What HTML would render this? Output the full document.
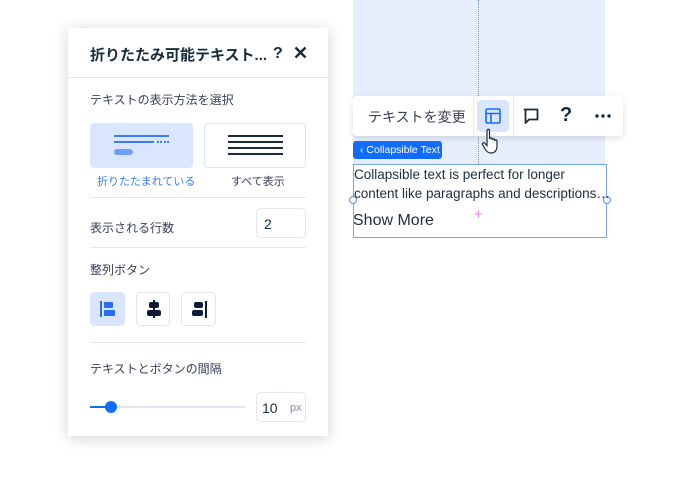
<!DOCTYPE html>
<html><head><meta charset="utf-8"><style>
*{margin:0;padding:0;box-sizing:border-box}
body{width:700px;height:480px;background:#fff;position:relative;overflow:hidden;font-family:"Liberation Sans","Noto Sans CJK JP",sans-serif;color:#20303c}
.abs{position:absolute}
.panel{left:68px;top:28px;width:260px;height:408px;background:#fff;box-shadow:0 2px 14px rgba(0,0,0,.18)}
.hr{position:absolute;left:22px;width:216px;height:1px;background:#e3e6ec}
.lbl{position:absolute;font-size:12px;color:#3b4057}
</style></head><body>
<div class="abs" style="left:353px;top:0;width:252px;height:164px;background:#e7effd"></div>
<div class="abs" style="left:478px;top:0;height:164px;border-left:1.5px dotted #5b8ef0"></div>

<div class="abs panel">
  <div class="abs" style="left:22px;top:16px;font-size:15px;font-weight:bold;color:#162d3d;white-space:nowrap">折りたたみ可能テキスト...</div>
  <div class="abs" style="left:205px;top:17px;font-size:16px;font-weight:bold;color:#162d3d">?</div>
  <svg class="abs" style="left:226px;top:18px" width="13" height="13"><path d="M1.5 1.5L11.5 11.5M11.5 1.5L1.5 11.5" stroke="#162d3d" stroke-width="2.4"/></svg>
  <div class="abs" style="left:0;top:49px;width:260px;height:1px;background:#e3e6ec"></div>
  <div class="lbl" style="left:22px;top:63px">テキストの表示方法を選択</div>
  <div class="abs" style="left:22px;top:95px;width:103px;height:45px;background:#d9e6fd;border-radius:4px">
    <div class="abs" style="left:24px;top:12px;width:55px;height:2px;background:#3a7cf2"></div>
    <div class="abs" style="left:24px;top:18px;width:40px;height:2px;background:#3a7cf2"></div>
    <div class="abs" style="left:67px;top:18px;width:12px;height:2px;border-top:2px dotted #3a7cf2"></div>
    <div class="abs" style="left:24px;top:26px;width:19px;height:6px;background:#6fa0f5;border-radius:3px"></div>
  </div>
  <div class="abs" style="left:136px;top:95px;width:102px;height:45px;border:1px solid #dfe3ea;border-radius:4px">
    <div class="abs" style="left:23px;top:11px;width:55px;height:2px;background:#162d3d"></div>
    <div class="abs" style="left:23px;top:17px;width:55px;height:2px;background:#162d3d"></div>
    <div class="abs" style="left:23px;top:23px;width:55px;height:2px;background:#162d3d"></div>
    <div class="abs" style="left:23px;top:29px;width:55px;height:2px;background:#162d3d"></div>
  </div>
  <div class="abs" style="left:29px;top:145px;font-size:11px;color:#3a7cf2">折りたたまれている</div>
  <div class="abs" style="left:163px;top:145px;font-size:11px;color:#3b4057">すべて表示</div>
  <div class="hr" style="top:169px"></div>
  <div class="lbl" style="left:22px;top:191px">表示される行数</div>
  <div class="abs" style="left:188px;top:180px;width:50px;height:30px;border:1px solid #e3e6ec;border-radius:5px;font-size:14px;padding:7px 0 0 7px;color:#162d3d">2</div>
  <div class="hr" style="top:219px"></div>
  <div class="lbl" style="left:22px;top:233px">整列ボタン</div>
  <div class="abs" style="left:22px;top:264px;width:35px;height:34px;background:#d9e6fd;border-radius:4px">
    <div class="abs" style="left:10px;top:9px;width:2px;height:16px;background:#2a6ef0"></div>
    <div class="abs" style="left:14px;top:10px;width:9px;height:6px;background:#2a6ef0;border-radius:1px"></div>
    <div class="abs" style="left:14px;top:18px;width:11px;height:6px;background:#2a6ef0;border-radius:1px"></div>
  </div>
  <div class="abs" style="left:68px;top:264px;width:34px;height:34px;border:1px solid #e3e6ec;border-radius:4px">
    <div class="abs" style="left:16px;top:7px;width:2px;height:18px;background:#0c1a3c"></div>
    <div class="abs" style="left:12px;top:9px;width:10px;height:6px;background:#0c1a3c;border-radius:2px"></div>
    <div class="abs" style="left:10px;top:17px;width:14px;height:6px;background:#0c1a3c;border-radius:2px"></div>
  </div>
  <div class="abs" style="left:113px;top:264px;width:35px;height:34px;border:1px solid #e3e6ec;border-radius:4px">
    <div class="abs" style="left:23px;top:8px;width:2px;height:17px;background:#0c1a3c"></div>
    <div class="abs" style="left:12px;top:9px;width:9px;height:6px;background:#0c1a3c;border-radius:2px"></div>
    <div class="abs" style="left:10px;top:17px;width:11px;height:6px;background:#0c1a3c;border-radius:2px"></div>
  </div>
  <div class="hr" style="top:314px"></div>
  <div class="lbl" style="left:22px;top:332px">テキストとボタンの間隔</div>
  <div class="abs" style="left:22px;top:378px;width:155px;height:2px;background:#e3e6ec"></div>
  <div class="abs" style="left:22px;top:378px;width:20px;height:2px;background:#116dff"></div>
  <div class="abs" style="left:37px;top:373px;width:12px;height:12px;border-radius:50%;background:#116dff"></div>
  <div class="abs" style="left:188px;top:364px;width:50px;height:30px;border:1px solid #e3e6ec;border-radius:5px">
    <div class="abs" style="left:5px;top:7px;font-size:14px;color:#162d3d">10</div>
    <div class="abs" style="left:33px;top:9px;font-size:11px;color:#868aa5">px</div>
  </div>
</div>

<div class="abs" style="left:353px;top:96px;width:270px;height:40px;background:#fff;border-radius:4px;box-shadow:0 2px 8px rgba(0,0,0,.13)">
  <div class="abs" style="left:15px;top:11px;font-size:14px;color:#3b4057">テキストを変更</div>
  <div class="abs" style="left:120px;top:0;width:1px;height:40px;background:#e8eaf0"></div>
  <div class="abs" style="left:160px;top:0;width:1px;height:40px;background:#e8eaf0"></div>
  <div class="abs" style="left:124px;top:4px;width:32px;height:32px;background:#d9e6fd;border-radius:4px">
    <svg class="abs" style="left:8px;top:8px" width="16" height="16"><rect x="1" y="1" width="14" height="14" rx="1.5" fill="none" stroke="#116dff" stroke-width="1.6"/><path d="M1 5.5H15M6 5.5V15" stroke="#116dff" stroke-width="1.6"/></svg>
  </div>
  <svg class="abs" style="left:170px;top:12px" width="16" height="17"><path d="M1.5 1.5H14.5V11.5H6L2.5 15V1.5Z" fill="none" stroke="#162d3d" stroke-width="1.8" stroke-linejoin="round"/></svg>
  <div class="abs" style="left:207px;top:8px;font-size:20px;font-weight:bold;color:#162d3d">?</div>
  <svg class="abs" style="left:242px;top:18px" width="16" height="4"><circle cx="2" cy="2" r="1.7" fill="#162d3d"/><circle cx="8" cy="2" r="1.7" fill="#162d3d"/><circle cx="14" cy="2" r="1.7" fill="#162d3d"/></svg>
</div>
<svg class="abs" style="left:481px;top:127px" width="22" height="28"><path d="M6 3.5C6 2 8.5 2 8.5 3.5V12C8.5 10.5 11 10.5 11 12V13C11 11.5 13.5 11.5 13.5 13V14C13.5 12.5 16 12.5 16 14V19C16 23 14 26 10 26C7 26 5.5 24.5 4 22L1.5 17.5C0.8 16 2.5 15 3.7 16.2L6 18.5Z" fill="#fff" stroke="#162d3d" stroke-width="1.2"/></svg>

<div class="abs" style="left:353px;top:141px;width:89px;height:18px;background:#116dff;border-radius:3px;color:#fff;font-size:10.5px;padding:3px 0 0 7px;white-space:nowrap">‹ Collapsible Text</div>
<div class="abs" style="left:353px;top:164px;width:254px;height:74px;border:1px solid #7aa2f5"></div>
<div class="abs" style="left:349px;top:196px;width:8px;height:8px;border-radius:50%;background:#fff;border:1px solid #5b8ef0"></div>
<div class="abs" style="left:603px;top:196px;width:8px;height:8px;border-radius:50%;background:#fff;border:1px solid #5b8ef0"></div>
<div class="abs" style="left:354px;top:165px;font-size:13.5px;line-height:19px;color:#20303c;white-space:nowrap">Collapsible text is perfect for longer<br>content like paragraphs and descriptions…</div>
<div class="abs" style="left:353px;top:212px;font-size:16px;color:#20303c">Show More</div>
<div class="abs" style="left:474px;top:206px;font-size:15px;color:#f07ae0">+</div>
</body></html>
